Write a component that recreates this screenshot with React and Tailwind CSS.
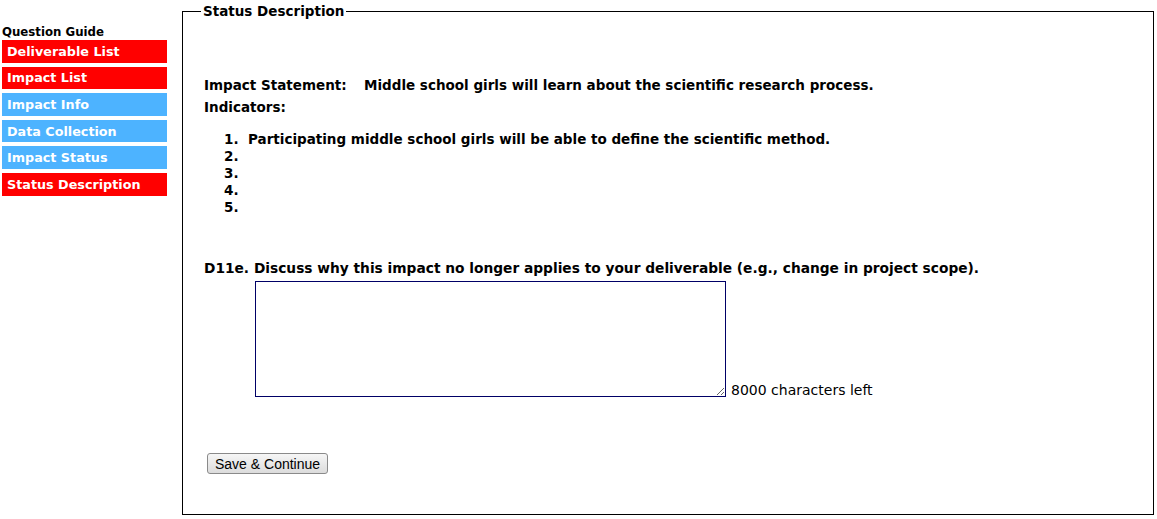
import React, { useState } from 'react';

const guide = [
  { label: 'Deliverable List', done: true },
  { label: 'Impact List', done: true },
  { label: 'Impact Info', done: false },
  { label: 'Data Collection', done: false },
  { label: 'Impact Status', done: false },
  { label: 'Status Description', done: true },
];

const indicators = [
  'Participating middle school girls will be able to define the scientific method.',
  '',
  '',
  '',
  '',
];

const MAX = 8000;

export default function App() {
  const [text, setText] = useState('');

  return (
    <div className="flex items-start bg-white text-black font-['DejaVu_Sans',Verdana,sans-serif] min-h-[519px]">
      {/* Sidebar */}
      <div className="w-[167px] pl-[2px] pt-[25px] shrink-0">
        <div className="text-[11.75px] font-bold leading-[15px]">Question Guide</div>
        <div className="flex flex-col gap-[4px]">
          {guide.map(g => (
            <div
              key={g.label}
              className={`h-[22.6px] flex items-center pl-[5px] text-white text-[12.75px] font-bold ${g.done ? 'bg-[#ff0000]' : 'bg-[#4db3ff]'}`}
            >
              {g.label}
            </div>
          ))}
        </div>
      </div>

      {/* Main */}
      <fieldset className="ml-[15px] mt-[1px] w-[972px] h-[514px] border border-black pl-[18px] pr-4">
        <legend className="px-[2px] text-[13.5px] font-bold leading-[20px]">Status Description</legend>

        <div className="pl-[3px] pt-[53px] text-[13.5px] font-bold">
          <div className="flex leading-[22px]">
            <span className="w-[160px]">Impact Statement:</span>
            <span>Middle school girls will learn about the scientific research process.</span>
          </div>
          <div className="leading-[22px]">Indicators:</div>

          <ol className="mt-[13px] pl-[20px]">
            {indicators.map((ind, i) => (
              <li key={i} className="flex leading-[17px]">
                <span className="w-[24px]">{i + 1}.</span>
                <span>{ind}</span>
              </li>
            ))}
          </ol>

          <div className="mt-[43px] leading-[18px] text-[13.75px]">
            D11e. Discuss why this impact no longer applies to your deliverable (e.g., change in project scope).
          </div>

          <div className="flex items-end mt-[4px] pl-[51px]">
            <textarea
              value={text}
              onChange={e => setText(e.target.value)}
              maxLength={MAX}
              className="w-[471px] h-[116px] border border-[#000066] bg-white outline-none text-[13px] font-normal"
            />
            <span className="ml-[5px] mb-[-2px] text-[14px] font-normal leading-[18px]">
              {MAX - text.length} characters left
            </span>
          </div>

          <button
            className="mt-[56px] ml-[3px] h-[21px] px-[7px] rounded-[3px] border border-[#8a8a8a] bg-gradient-to-b from-[#f6f6f6] to-[#dcdcdc] font-['Liberation_Sans',Arial,sans-serif] font-normal text-[14px] leading-[18px]"
          >
            Save &amp; Continue
          </button>
        </div>
      </fieldset>
    </div>
  );
}
